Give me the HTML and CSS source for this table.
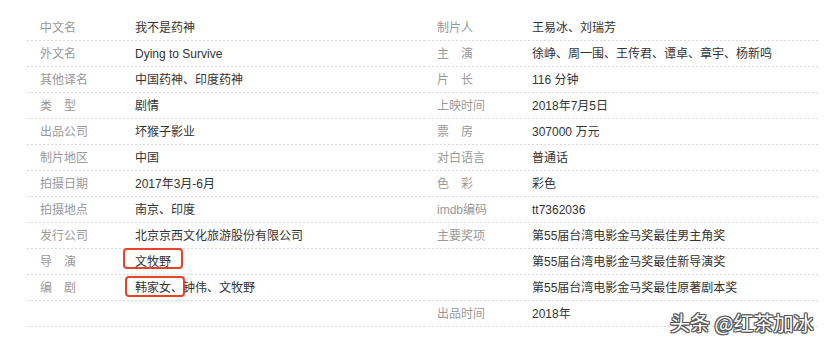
FILE: index.html
```html
<!DOCTYPE html>
<html lang="zh-CN">
<head>
<meta charset="utf-8">
<title>我不是药神</title>
<link rel="stylesheet" href="styles.css">
</head>
<body>
<div class="info">
  <dl class="col">
    <div class="row"><dt>中文名</dt><dd>我不是药神</dd></div>
    <div class="row"><dt>外文名</dt><dd>Dying to Survive</dd></div>
    <div class="row"><dt>其他译名</dt><dd>中国药神、印度药神</dd></div>
    <div class="row"><dt>类　型</dt><dd>剧情</dd></div>
    <div class="row"><dt>出品公司</dt><dd>坏猴子影业</dd></div>
    <div class="row"><dt>制片地区</dt><dd>中国</dd></div>
    <div class="row"><dt>拍摄日期</dt><dd>2017年3月-6月</dd></div>
    <div class="row"><dt>拍摄地点</dt><dd>南京、印度</dd></div>
    <div class="row"><dt>发行公司</dt><dd>北京京西文化旅游股份有限公司</dd></div>
    <div class="row"><dt>导　演</dt><dd><span class="mark mark-a">文牧野</span></dd></div>
    <div class="row"><dt>编　剧</dt><dd><span class="mark mark-b">韩家女、</span>钟伟、文牧野</dd></div>
    <div class="row"><dt></dt><dd></dd></div>
  </dl>
  <dl class="col">
    <div class="row"><dt>制片人</dt><dd>王易冰、刘瑞芳</dd></div>
    <div class="row"><dt>主　演</dt><dd>徐峥、周一围、王传君、谭卓、章宇、杨新鸣</dd></div>
    <div class="row"><dt>片　长</dt><dd>116 分钟</dd></div>
    <div class="row"><dt>上映时间</dt><dd>2018年7月5日</dd></div>
    <div class="row"><dt>票　房</dt><dd>307000 万元</dd></div>
    <div class="row"><dt>对白语言</dt><dd>普通话</dd></div>
    <div class="row"><dt>色　彩</dt><dd>彩色</dd></div>
    <div class="row"><dt>imdb编码</dt><dd>tt7362036</dd></div>
    <div class="row"><dt>主要奖项</dt><dd>第55届台湾电影金马奖最佳男主角奖</dd></div>
    <div class="row"><dt></dt><dd>第55届台湾电影金马奖最佳新导演奖</dd></div>
    <div class="row"><dt></dt><dd>第55届台湾电影金马奖最佳原著剧本奖</dd></div>
    <div class="row"><dt>出品时间</dt><dd>2018年</dd></div>
  </dl>
</div>
<div class="watermark">头条 @红茶加冰</div>
</body>
</html>
```

FILE: styles.css
```css
html, body {
  margin: 0;
  padding: 0;
  background: #fff;
}
body {
  width: 832px;
  height: 346px;
  position: relative;
  overflow: hidden;
  font-family: "Liberation Sans", "Noto Sans CJK SC", sans-serif;
  font-size: 12px;
}
.info {
  display: grid;
  grid-template-columns: 397px 396px;
  margin: 15px 0 0 27px;
  width: 793px;
}
.col {
  margin: 0;
  padding: 0;
}
.row {
  display: flex;
  align-items: center;
  height: 24px;
  background-image: repeating-linear-gradient(to right, #d9d9d9 0 2px, transparent 2px 4px);
  background-size: 100% 1px;
  background-repeat: no-repeat;
  background-position: left bottom;
  padding: 1px 0;
}
dt {
  width: 95px;
  padding-left: 13px;
  color: #999;
  flex: none;
  line-height: 14px;
}
dd {
  margin: 0;
  color: #333;
  white-space: nowrap;
  line-height: 14px;
}
.mark {
  position: relative;
  display: inline-block;
  line-height: 14px;
  vertical-align: top;
}
.mark::after {
  content: "";
  position: absolute;
  border: 2px solid #e8412c;
  border-radius: 4px;
}
.mark-a::after {
  left: -12px;
  right: -12px;
  top: -7px;
  bottom: 0;
}
.mark-b::after {
  left: -10px;
  right: -2px;
  top: -5px;
  bottom: -2px;
}
.watermark {
  position: absolute;
  left: 670px;
  top: 310px;
  font-size: 20px;
  line-height: 26px;
  color: #fff;
  font-family: "Noto Sans CJK SC", sans-serif;
  text-shadow: -1px -1px 0 #555, 1px -1px 0 #555, -1px 1px 0 #555, 1px 1px 0 #555, 0 1px 0 #555, 0 -1px 0 #555, 1px 0 0 #555, -1px 0 0 #555;
}
```
